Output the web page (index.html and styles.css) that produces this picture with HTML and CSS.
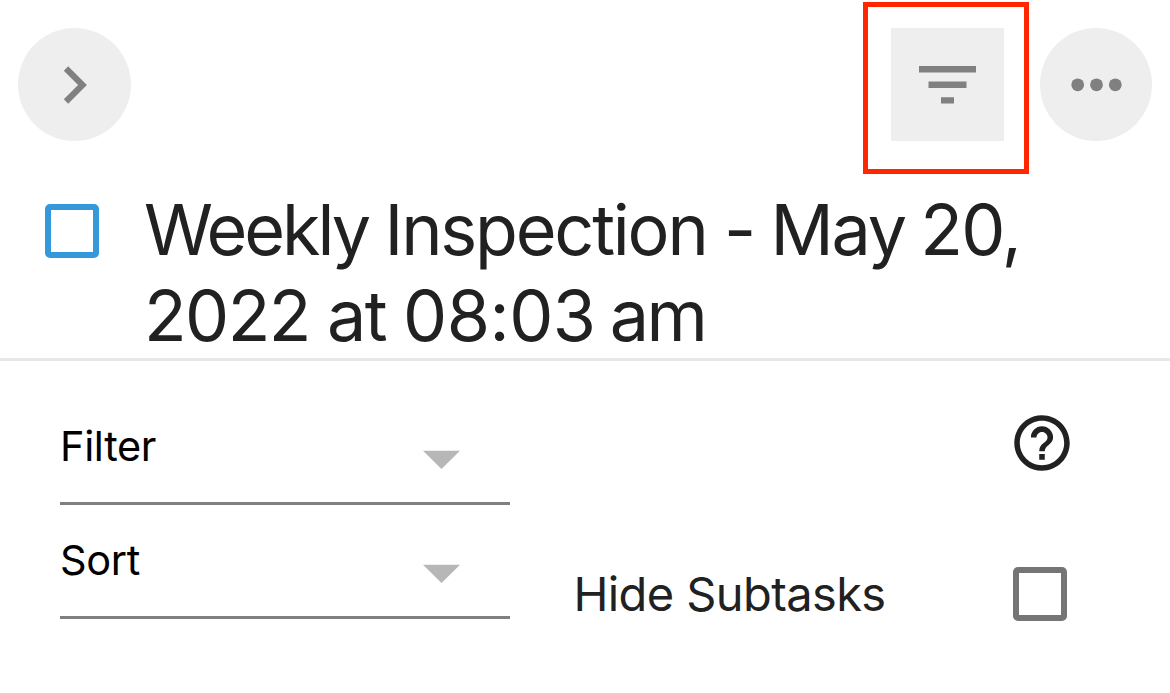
FILE: index.html
```html
<!DOCTYPE html>
<html lang="en">
<head>
<meta charset="utf-8">
<title>Weekly Inspection</title>
<link rel="stylesheet" href="styles.css">
</head>
<body>
<header class="toolbar">
  <button class="btn round" aria-label="Collapse"><svg width="113" height="113" viewBox="0 0 113 113"><path d="M48 40.500 64.500 57 48 73.500" fill="none" stroke="#808080" stroke-width="6.200"/></svg></button>
  <div class="highlight"><button class="btn" aria-label="Filter"><svg width="113" height="113" viewBox="0 0 113 113" fill="#808080"><path d="M28 38h57v6.400H28zM37.500 53.600h38V60h-38zM50 69.200h13v6.400H50z"/></svg></button></div>
  <button class="btn round more" aria-label="More"><svg width="112" height="113" viewBox="0 0 112 113" fill="#808080"><circle cx="37.700" cy="56.800" r="6.400"/><circle cx="56.500" cy="56.800" r="6.400"/><circle cx="75.300" cy="56.800" r="6.400"/></svg></button>
</header>
<section class="task">
  <span class="box blue"></span>
  <h1 class="title"><span class="line first"><span class="weekly">Weekly</span> Inspection <span class="dash">-</span> May <span class="day">20,</span></span><span class="line second">2022 at <span class="time">08:03</span> <span class="am">am</span></span></h1>
</section>
<main class="options">
  <div class="fields">
    <div class="select"><span class="label">Filter</span><svg class="arrow" width="37" height="19" viewBox="0 0 37 19"><path d="M0 .7h37L18.500 19z" fill="#b7b7b7"/></svg></div>
    <div class="select"><span class="label">Sort</span><svg class="arrow" width="37" height="19" viewBox="0 0 37 19"><path d="M0 .7h37L18.500 19z" fill="#b7b7b7"/></svg></div>
  </div>
  <div class="hide">Hide Subtasks</div>
  <div class="side">
    <svg class="help" width="56" height="56" viewBox="1.900 1.900 20.200 20.200" fill="#212121"><path d="M11 18h2v-2h-2v2zm1-16C6.480 2 2 6.480 2 12s4.480 10 10 10 10-4.480 10-10S17.520 2 12 2zm0 18c-4.410 0-8-3.590-8-8s3.590-8 8-8 8 3.590 8 8-3.590 8-8 8zm0-14c-2.210 0-4 1.790-4 4h2c0-1.100.9-2 2-2s2 .9 2 2c0 2-3 1.750-3 5h2c0-2.250 3-2.500 3-5 0-2.210-1.790-4-4-4z"/></svg>
    <span class="box gray"></span>
  </div>
</main>
</body>
</html>
```

FILE: styles.css
```css
* { box-sizing: border-box; }
body { margin: 0; height: 693px; overflow: hidden; background: #fff; color: #212121; font-family: Inter, "Liberation Sans", sans-serif; }
.toolbar { display: flex; height: 174px; padding: 0 18px; }
.btn { width: 113px; height: 113px; padding: 0; border: 0; background: #eee; margin-top: 28px; flex: none; }
.btn svg { display: block; }
.round { border-radius: 50%; }
.more { width: 112px; }
.highlight { width: 166px; height: 172px; margin: 2px 11px 0 auto; border: 5px solid #ff2600; padding-left: 23px; }
.highlight .btn { margin-top: 21px; }
.task { display: flex; height: 187px; padding: 13px 0 0 45px; border-bottom: 3px solid #e7e7e7; }
.box { display: block; width: 54px; height: 54px; border: 6px solid #757575; border-radius: 5px; flex: none; }
.blue { border-color: #3498db; margin-top: 17px; }
.title { margin: 0 0 0 45px; font-weight: 400; font-size: 70px; line-height: 86px; }
.line { display: block; white-space: nowrap; }
.first { letter-spacing: -2.2px; word-spacing: -2px; }
.weekly { letter-spacing: -3px; margin-right: 1px; }
.dash { margin: 0 1px 0 2px; }
.day { letter-spacing: -1.8px; }
.second { letter-spacing: -1.6px; word-spacing: -1px; }
.time { letter-spacing: -0.5px; }
.am { letter-spacing: -2.5px; margin-left: -3px; }
.options { display: flex; padding-left: 60px; }
.fields { width: 450px; padding-top: 30px; }
.select { display: flex; justify-content: space-between; height: 114px; padding: 30px 50px 0 0; border-bottom: 3px solid #808080; color: #000; }
.label { font-size: 41.5px; line-height: 50px; letter-spacing: -0.35px; }
.arrow { margin-top: 29px; }
.hide { margin: 204px 0 0 63.500px; font-size: 47px; line-height: 58px; letter-spacing: -0.6px; white-space: nowrap; width: 439.500px; }
.side { padding-top: 54px; }
.help { display: block; margin-left: 1px; }
.gray { margin-top: 96px; }
```
